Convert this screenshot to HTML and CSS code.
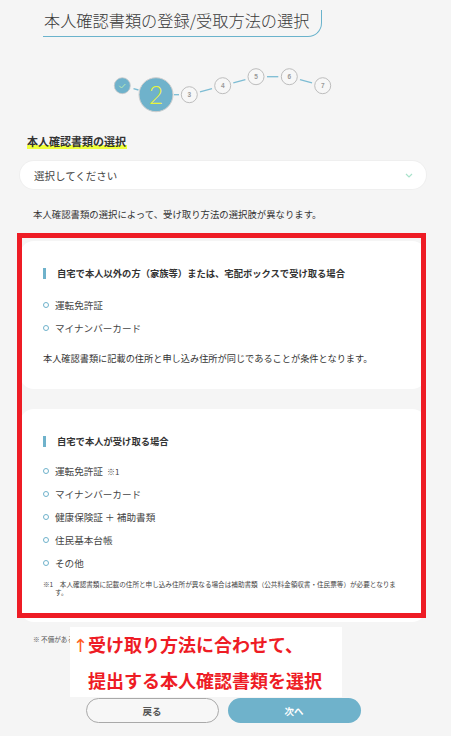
FILE: index.html
```html
<!DOCTYPE html>
<html lang="ja">
<head>
<meta charset="utf-8">
<title>本人確認書類の登録/受取方法の選択</title>
<link rel="stylesheet" href="styles.css">
</head>
<body>
<div class="page">
  <h1 class="title">本人確認書類の登録/受取方法の選択</h1>

  <svg class="stepper" viewBox="0 55 451 62" width="451" height="62" aria-label="ステップ 2/7">
    <g class="lines">
      <line x1="133.5" y1="88.6" x2="138.5" y2="90"/>
      <line x1="174" y1="94.7" x2="179" y2="94.7"/>
      <line x1="200" y1="91.8" x2="212" y2="88.6"/>
      <line x1="233.3" y1="82.8" x2="245.4" y2="79.6"/>
      <line x1="267" y1="76.7" x2="278.3" y2="76.7"/>
      <line x1="300" y1="79.6" x2="312" y2="82.8"/>
    </g>
    <circle class="done" cx="122.3" cy="85.7" r="8"/>
    <path class="check" d="M119.3 85.8 L121.5 88 L125.4 84"/>
    <circle class="current" cx="156" cy="94.7" r="17"/>
    <text class="cur-num" x="156" y="103.5" text-anchor="middle">2</text>
    <g class="todo">
      <circle cx="189.3" cy="94.7" r="8"/>
      <circle cx="222.7" cy="85.7" r="8"/>
      <circle cx="256" cy="76.7" r="8"/>
      <circle cx="289.3" cy="76.7" r="8"/>
      <circle cx="322.7" cy="85.7" r="8"/>
    </g>
    <g class="nums" text-anchor="middle">
      <text x="189.3" y="97">3</text>
      <text x="222.7" y="88">4</text>
      <text x="256" y="79">5</text>
      <text x="289.3" y="79">6</text>
      <text x="322.7" y="88">7</text>
    </g>
  </svg>

  <main class="content">
    <h2 class="sec-title"><span class="marker">本人確認書類の選択</span></h2>

    <div class="select">
      <span class="select-text">選択してください</span>
      <svg class="chev" viewBox="0 0 8 5" width="8" height="5"><path d="M1 1 L4 4 L7 1"/></svg>
    </div>

    <p class="desc">本人確認書類の選択によって、受け取り方法の選択肢が異なります。</p>

    <section class="card card-first">
      <h3 class="card-title"><span class="bar"></span>自宅で本人以外の方（家族等）または、宅配ボックスで受け取る場合</h3>
      <ul class="items">
        <li><span class="dot"></span>運転免許証</li>
        <li><span class="dot"></span>マイナンバーカード</li>
      </ul>
      <p class="cond">本人確認書類に記載の住所と申し込み住所が同じであることが条件となります。</p>
    </section>

    <section class="card card-second">
      <h3 class="card-title"><span class="bar"></span>自宅で本人が受け取る場合</h3>
      <ul class="items items-tight">
        <li><span class="dot"></span>運転免許証 <span class="ref">※1</span></li>
        <li><span class="dot"></span>マイナンバーカード</li>
        <li><span class="dot"></span>健康保険証 ＋ 補助書類</li>
        <li><span class="dot"></span>住民基本台帳</li>
        <li><span class="dot"></span>その他</li>
      </ul>
      <p class="note">※1　本人確認書類に記載の住所と申し込み住所が異なる場合は補助書類（公共料金領収書・住民票等）が必要となります。</p>
    </section>

    <p class="foot">※ 不備がある場合は、再度ご提出いただく場合があります。</p>

    <div class="buttons">
      <button class="btn btn-back">戻る</button>
      <button class="btn btn-next">次へ</button>
    </div>
  </main>

  <div class="highlight-box"></div>
  <div class="callout">
    <div class="callout-line"><span class="arrow">↑</span>受け取り方法に合わせて、</div>
    <div class="callout-line indent">提出する本人確認書類を選択</div>
  </div>
</div>
</body>
</html>
```

FILE: styles.css
```css
* { box-sizing: border-box; }

html, body {
  margin: 0;
  padding: 0;
  background: #f5f5f5;
}

body {
  font-family: "Noto Sans CJK JP", "Noto Sans", sans-serif;
  color: #333;
  width: 451px;
  height: 736px;
  overflow: hidden;
}

.page {
  position: relative;
  width: 451px;
  padding-top: 10px;
}

.title {
  margin: 0 0 0 43px;
  width: 279px;
  padding: 0 0 6px 1px;
  font-size: 16.2px;
  line-height: 20px;
  font-weight: 300;
  color: #3a3a3a;
  border-bottom: 1px solid #6ab3cc;
  border-right: 1px solid #6ab3cc;
  border-bottom-right-radius: 14px;
  white-space: nowrap;
}

.stepper {
  display: block;
  margin-top: 18px;
}

.stepper .lines line {
  stroke: #7dbcd3;
  stroke-width: 1.3;
}

.stepper .done {
  fill: #6fb2cb;
  stroke: #c9c9c9;
  stroke-width: 0.8;
}

.stepper .check {
  fill: none;
  stroke: #b9ecb4;
  stroke-width: 1;
}

.stepper .current {
  fill: #6fb2cb;
  stroke: #cfcfcf;
  stroke-width: 1;
}

.stepper .cur-num {
  font-family: Lato, "Liberation Sans", sans-serif;
  font-weight: 300;
  font-size: 25px;
  fill: #e8f43e;
}

.stepper .todo circle {
  fill: #f7f7f7;
  stroke: #bdbdbd;
  stroke-width: 1;
}

.stepper .nums text {
  font-family: "Liberation Sans", sans-serif;
  font-size: 6.5px;
  font-weight: bold;
  fill: #9a9a9a;
}

.content {
  padding: 0 25px 0 20px;
}

.sec-title {
  margin: 17px 0 0 7px;
  font-size: 11px;
  line-height: 14px;
  font-weight: bold;
  color: #333;
}

.marker {
  background: linear-gradient(transparent 72%, #eeff3a 72%);
  padding: 0 1px 0 0;
}

.select {
  margin-top: 13px;
  height: 28px;
  background: #fff;
  border-radius: 14px;
  box-shadow: 0 0 0 1px #efefef;
  display: flex;
  align-items: center;
  justify-content: space-between;
  padding: 0 13px 0 14px;
}

.select-text {
  font-size: 10.5px;
  color: #444;
}

.chev path {
  fill: none;
  stroke: #a9e2cb;
  stroke-width: 1.2;
}

.desc {
  margin: 18px 0 0 13px;
  font-size: 9.4px;
  line-height: 14px;
  color: #333;
}

.card {
  background: #fff;
  border-radius: 14px;
  padding: 25px 23px 24px;
}

.card-first { margin-top: 20px; }
.card-second { margin-top: 20px; padding-bottom: 26px; }

.card-title {
  margin: 0;
  display: flex;
  align-items: center;
  gap: 11px;
  font-size: 9.3px;
  line-height: 14px;
  font-weight: bold;
  color: #333;
  white-space: nowrap;
}

.bar {
  width: 3px;
  height: 11px;
  background: #6fb2cb;
  flex: none;
}

.items {
  list-style: none;
  margin: 13px 0 0;
  padding: 0;
}

.items-tight {
  margin-top: 11.5px;
}

.items li {
  display: flex;
  align-items: center;
  height: 23px;
  font-size: 9.6px;
  color: #444;
}

.dot {
  width: 6px;
  height: 6px;
  border-radius: 50%;
  border: 1.5px solid #6fb2cb;
  margin-right: 6px;
  flex: none;
}

.ref {
  margin-left: 4px;
  font-size: 8px;
}

.cond {
  margin: 12px 0 0;
  font-size: 9.2px;
  line-height: 14px;
  color: #333;
}

.note {
  margin: 5px 0 0;
  font-size: 6.6px;
  line-height: 8.4px;
  color: #444;
  padding-left: 12px;
  text-indent: -12px;
}

.foot {
  margin: 13px 0 0 13px;
  font-size: 6.6px;
  line-height: 8px;
  color: #555;
}

.buttons {
  margin-top: 55px;
  display: flex;
  justify-content: center;
  gap: 9px;
}

.btn {
  width: 133px;
  height: 25px;
  border-radius: 13px;
  font-family: "Noto Sans CJK JP", sans-serif;
  font-size: 9.5px;
  font-weight: bold;
  cursor: pointer;
}

.btn-back {
  background: #f7f7f7;
  border: 1px solid #a9a9a9;
  color: #555;
}

.btn-next {
  background: #6fb2cb;
  border: none;
  color: #fff;
}

.highlight-box {
  position: absolute;
  left: 17px;
  top: 233px;
  width: 409px;
  height: 385px;
  border: 5px solid #ee1c25;
}

.callout {
  position: absolute;
  left: 70px;
  top: 627px;
  width: 272px;
  height: 70px;
  background: #fff;
  padding-left: 3px;
}

.callout-line {
  font-size: 18px;
  line-height: 35px;
  font-weight: bold;
  color: #ee1c25;
  white-space: nowrap;
}

.callout-line.indent {
  padding-left: 15px;
}

.arrow {
  display: inline-block;
  width: 15px;
  color: #ff5a22;
  font-weight: normal;
  font-family: "DejaVu Sans", sans-serif;
}
```
